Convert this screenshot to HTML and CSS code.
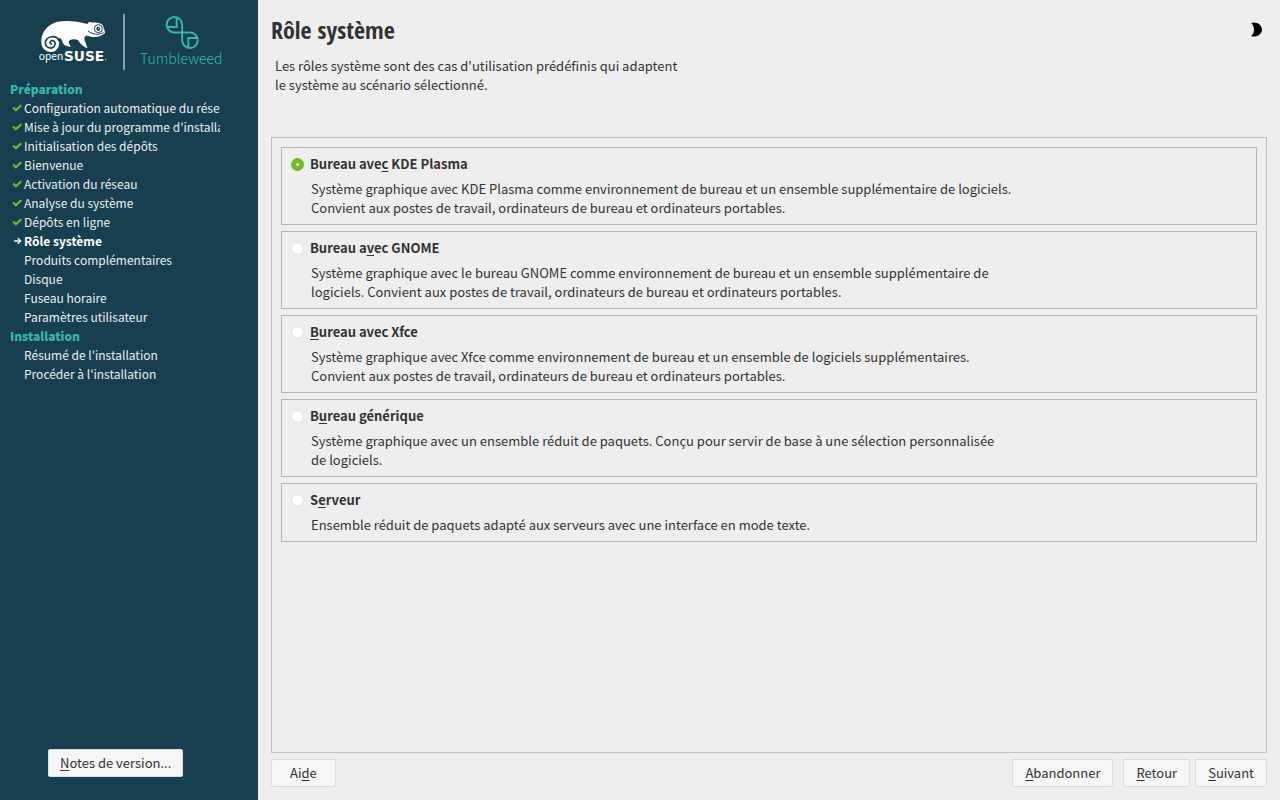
FILE: index.html
```html
<!DOCTYPE html>
<html lang="fr">
<head>
  <meta charset="UTF-8" />
  <meta name="viewport" content="width=device-width, initial-scale=1.0"/>
  <title>Rôle système</title>
  <link rel="stylesheet" href="styles.css">
</head>
<body>
  <svg class="symbols" aria-hidden="true">
    <symbol id="check" viewBox="0 0 9 7">
      <path fill="none" stroke="#73ba25" stroke-width="2" d="M1 3 L3.5 5.5 L8.3 1"/>
    </symbol>
    <symbol id="arrow" viewBox="0 0 9 7">
      <path fill="none" stroke="#fff" stroke-width="1.3" d="M2 3.5 H8 M5.2 1 L7.8 3.5 L5.2 6"/>
    </symbol>
  </svg>

  <aside class="sidebar">
    <div class="logos">
      <svg class="logo-suse" viewBox="0 0 279 210" role="img" aria-label="openSUSE">
        <path fill="#fff" d="M34 112 C32 88 48 60 80 51 C105 46 140 48 172 57 L176 52 C181 50 184 51 188 53 C200 52 216 56 219 62 C221 70 225 76 225 84 C218 92 202 97 188 96 C180 94 173 92 168 92 C161 96 162 103 166 111 C168 118 171 123 172 129 C162 127 151 117 144 105 C136 102 126 102 120 105 C112 111 119 119 123 125 C107 125 99 119 97 109 C93 98 88 98 84 101 C94 118 83 140 63 141 C46 141 34 129 34 112 Z"/>
        <path fill="none" stroke="#173f4f" stroke-width="5" stroke-linecap="round" d="M86 106 C78 89 50 92 46 112 C45 128 63 134 73 124 C80 115 73 105 64 107 C59 109 59 115 64 117"/>
        <path fill="none" stroke="#173f4f" stroke-width="3" d="M174 78 C188 89 206 91 221 83"/>
        <circle cx="205" cy="71" r="12" fill="#fff" stroke="#173f4f" stroke-width="3"/>
        <circle cx="205" cy="71" r="6" fill="#173f4f"/>
        <circle cx="207" cy="70" r="2" fill="#fff"/>
        <text class="brand-open" x="26" y="166">open</text>
        <text class="brand-suse" x="102" y="167">SUSE</text>
        <circle cx="227" cy="163" r="2" fill="#fff"/>
      </svg>
      <span class="divider"></span>
      <div class="product">
        <svg width="35" height="35" viewBox="0 0 108 108" aria-hidden="true">
          <g fill="none" stroke="#35b9ab" stroke-width="6">
            <path d="M54 54 H29 A24 24 0 1 1 53 30 V78 A24 24 0 1 0 78 54 Z"/>
            <path d="M36 6 V37 H6"/>
            <path d="M72 102 V71 H102"/>
          </g>
        </svg>
        <span>Tumbleweed</span>
      </div>
    </div>

    <nav class="steps">
      <h2>Préparation</h2>
      <ul>
        <li><svg><use href="#check"/></svg>Configuration automatique du réseau</li>
        <li><svg><use href="#check"/></svg>Mise à jour du programme d'installation</li>
        <li><svg><use href="#check"/></svg>Initialisation des dépôts</li>
        <li><svg><use href="#check"/></svg>Bienvenue</li>
        <li><svg><use href="#check"/></svg>Activation du réseau</li>
        <li><svg><use href="#check"/></svg>Analyse du système</li>
        <li><svg><use href="#check"/></svg>Dépôts en ligne</li>
        <li class="current"><svg><use href="#arrow"/></svg>Rôle système</li>
        <li>Produits complémentaires</li>
        <li>Disque</li>
        <li>Fuseau horaire</li>
        <li>Paramètres utilisateur</li>
      </ul>
      <h2>Installation</h2>
      <ul>
        <li>Résumé de l'installation</li>
        <li>Procéder à l'installation</li>
      </ul>
    </nav>

    <button type="button" class="btn notes"><span><u>N</u>otes de version...</span></button>
  </aside>

  <main>
    <header>
      <h1>Rôle système</h1>
      <button type="button" class="theme" aria-label="Changer de thème">
        <svg width="12" height="15" viewBox="0 0 12 15" aria-hidden="true">
          <path d="M1 1 C7 -1 12 3 12 7.5 C12 12 7 16 1 14 C5 11 5 4 1 1 Z"/>
        </svg>
      </button>
    </header>
    <p class="intro">Les rôles système sont des cas d'utilisation prédéfinis qui adaptent<br>le système au scénario sélectionné.</p>

    <form id="roles" class="roles">
      <div class="role">
        <input type="radio" name="role" id="kde" checked>
        <label for="kde">Bureau ave<u>c</u> KDE Plasma</label>
        <p>Système graphique avec KDE Plasma comme environnement de bureau et un ensemble supplémentaire de logiciels.<br>Convient aux postes de travail, ordinateurs de bureau et ordinateurs portables.</p>
      </div>
      <div class="role">
        <input type="radio" name="role" id="gnome">
        <label for="gnome">Bureau a<u>v</u>ec GNOME</label>
        <p>Système graphique avec le bureau GNOME comme environnement de bureau et un ensemble supplémentaire de<br>logiciels. Convient aux postes de travail, ordinateurs de bureau et ordinateurs portables.</p>
      </div>
      <div class="role">
        <input type="radio" name="role" id="xfce">
        <label for="xfce"><u>B</u>ureau avec Xfce</label>
        <p>Système graphique avec Xfce comme environnement de bureau et un ensemble de logiciels supplémentaires.<br>Convient aux postes de travail, ordinateurs de bureau et ordinateurs portables.</p>
      </div>
      <div class="role">
        <input type="radio" name="role" id="generique">
        <label for="generique">B<u>u</u>reau générique</label>
        <p>Système graphique avec un ensemble réduit de paquets. Conçu pour servir de base à une sélection personnalisée<br>de logiciels.</p>
      </div>
      <div class="role">
        <input type="radio" name="role" id="serveur">
        <label for="serveur">S<u>e</u>rveur</label>
        <p>Ensemble réduit de paquets adapté aux serveurs avec une interface en mode texte.</p>
      </div>
    </form>

    <footer>
      <button type="button" class="btn help"><span>Ai<u>d</u>e</span></button>
      <button type="button" class="btn abort"><span><u>A</u>bandonner</span></button>
      <button type="button" class="btn"><span><u>R</u>etour</span></button>
      <button type="submit" form="roles" class="btn"><span><u>S</u>uivant</span></button>
    </footer>
  </main>
</body>
</html>
```
FILE: styles.css
```css
* { box-sizing: border-box; }

body {
  margin: 0;
  min-height: 100vh;
  display: grid;
  grid-template-columns: 258px 1fr;
  background-color: #eee;
  color: #333;
  font-family: "Noto Sans CJK SC", "Open Sans", sans-serif;
  font-size: 13px;
  line-height: 19px;
}

h1, h2, p, ul { margin: 0; padding: 0; }

u { text-underline-offset: 2px; }

.symbols { display: none; }

.sidebar {
  background-color: #173f4f;
  color: #eee;
  display: flex;
  flex-direction: column;
  padding-bottom: 23px;
}

.logos {
  display: flex;
  height: 79px;
  padding: 5px 0 0 30px;
}

.logo-suse { width: 93px; height: 70px; flex: none; }

.brand-open {
  font-size: 31px;
  fill: #fff;
}

.brand-suse {
  font-family: "DejaVu Sans", sans-serif;
  font-weight: bold;
  font-size: 41px;
  fill: #fff;
}

.divider {
  width: 2px;
  height: 56px;
  margin-top: 9px;
  background-color: #8ba1aa;
}

.product {
  display: flex;
  flex-direction: column;
  align-items: center;
  margin-left: 15px;
  padding-top: 10px;
  color: #35b9ab;
  font-size: 14px;
  font-weight: 300;
  line-height: 16px;
}

.product svg { margin-left: 3px; }

.steps {
  width: 220px;
  padding-left: 10px;
  overflow: hidden;
  font-size: 12px;
}

.steps h2 {
  font-size: 12px;
  font-weight: 900;
  line-height: 19px;
  color: #35b9ab;
}

.steps li {
  list-style: none;
  position: relative;
  padding-left: 14px;
  white-space: nowrap;
}

.steps .current { font-weight: bold; color: #fff; }

.steps li svg {
  position: absolute;
  left: 2px;
  top: 6px;
  width: 10px;
  height: 8px;
}

.btn {
  height: 28px;
  padding: 0 12px 2px;
  border: 1px solid #dcdcdc;
  border-radius: 2px;
  background-color: #f6f6f6;
  color: #333;
  font: inherit;
}

.notes { margin: auto 0 0 48px; padding: 0 11px 2px; align-self: flex-start; }

main {
  display: flex;
  flex-direction: column;
  padding: 13px;
}

header {
  display: flex;
  justify-content: space-between;
  height: 43px;
}

h1 {
  font-family: "Open Sans Condensed", "Noto Sans CJK SC", sans-serif;
  font-size: 24px;
  line-height: 34px;
}

.theme {
  height: 32px;
  padding: 0 5px;
  border: 0;
  background: none;
}

.theme svg { display: block; }

.intro { padding-left: 4px; }

.roles {
  flex: 1;
  display: flex;
  flex-direction: column;
  gap: 6px;
  margin-top: 43px;
  padding: 9px;
  border: 1px solid #bfbfbf;
}

.role {
  display: grid;
  grid-template-columns: 13px 1fr;
  align-items: center;
  gap: 6px;
  padding: 6px 9px 7px;
  border: 1px solid #b5b5b5;
}

.role input {
  appearance: none;
  width: 13px;
  height: 13px;
  margin: 1px 0 0;
  border: 1px solid #dde0ee;
  border-radius: 50%;
  background-color: #fff;
}

.role input:checked { border: 5px solid #73ba25; }

.role label { font-weight: bold; justify-self: start; }

.role p { grid-column: 2; padding-left: 1px; }

footer {
  display: flex;
  gap: 5px;
  margin-top: 6px;
}

.help { padding: 0 18px 2px; margin-right: auto; }
.abort { margin-right: 5px; }
```
